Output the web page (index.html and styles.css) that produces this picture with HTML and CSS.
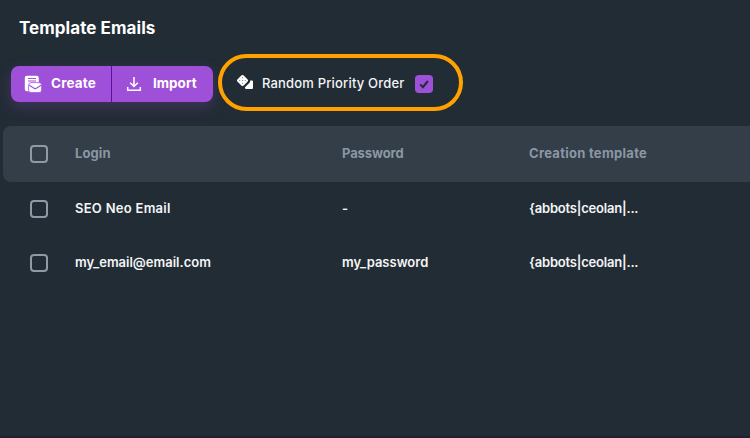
FILE: index.html
```html
<!DOCTYPE html>
<html lang="en">
<head>
<meta charset="utf-8">
<title>Template Emails</title>
<link rel="stylesheet" href="styles.css">
</head>
<body>
<main class="panel">
  <h1 class="title">Template Emails</h1>
  <div class="toolbar">
    <div class="button-group">
      <button class="btn btn-create">
        <svg width="18" height="18" viewBox="0 0 18 18">
          <path d="M3 .8h9.500q2.300 0 2.300 2.300V8H6v8.200H3Q.8 16.200.8 14V3Q.8.8 3 .8Z" fill="#fff"/>
          <path d="M4 3.500h8M4 6h8" stroke="#9f50d8" stroke-width="1.100"/>
          <rect x="4.600" y="7.600" width="13" height="10" rx="2.600" fill="#fff" stroke="#9f50d8" stroke-width=".8"/>
          <path d="M5.300 10.300l5.100 3.100q.8.400 1.600 0l5.100-3.100" fill="none" stroke="#9f50d8" stroke-width="1.200"/>
        </svg>
        <span class="label-create">Create</span>
      </button>
      <button class="btn btn-import">
        <svg width="16" height="16" viewBox="0 0 16 16" fill="none" stroke="#fff" stroke-width="1.500">
          <path d="M8 1v9M4.200 6.800L8 10.500l3.800-3.700M1.700 11v3.300h12.600V11"/>
        </svg>
        <span class="label-import">Import</span>
      </button>
    </div>
    <label class="priority">
      <svg width="18" height="16" viewBox="0 0 18 16">
        <rect x="2.200" y="2.200" width="8.600" height="8.600" rx="1.300" transform="rotate(45 6.500 6.500)" fill="#fff"/>
        <path d="M16 6.500q1 0 1 1V14q0 1-1 1H10q-1 0-1-1v-.8l4.500-4.500q1-1 .6-2.200Z" fill="#fff"/>
        <g fill="#222c35" fill-opacity=".6"><circle cx="6.500" cy="3.700" r=".6"/><circle cx="3.700" cy="6.500" r=".6"/><circle cx="6.500" cy="6.500" r=".6"/><circle cx="9.300" cy="6.500" r=".6"/><circle cx="6.500" cy="9.300" r=".6"/></g>
      </svg>
      <span class="label-priority">Random Priority Order</span>
      <span class="check checked">
        <svg width="18" height="18" viewBox="0 0 18 18"><path d="M5.200 9.400l2.700 2.800 5-6.200" fill="none" stroke="#222c35" stroke-width="2"/></svg>
      </span>
    </label>
  </div>
  <section class="table">
    <div class="row head">
      <span class="check"></span>
      <span class="cell">Login</span>
      <span class="cell cell-narrow">Password</span>
      <span class="cell cell-wide">Creation template</span>
    </div>
    <div class="row">
      <span class="check"></span>
      <span class="cell cell-name">SEO Neo Email</span>
      <span class="cell">-</span>
      <span class="cell cell-template">{abbots|ceolan|...</span>
    </div>
    <div class="row">
      <span class="check"></span>
      <span class="cell cell-mail">my_email@email.com</span>
      <span class="cell cell-mail">my_password</span>
      <span class="cell cell-template">{abbots|ceolan|...</span>
    </div>
  </section>
</main>
</body>
</html>
```
FILE: styles.css
```css
* { box-sizing: border-box; }
body {
  margin: 0;
  height: 438px;
  overflow: hidden;
  background: #222c35;
  border-bottom: 2px solid #241f33;
  color: #f4f5f6;
  font: 500 13px/18px Inter, "Liberation Sans", sans-serif;
  white-space: nowrap;
}
.title {
  margin: 0;
  padding: 16px 0 0 19px;
  font-size: 17px;
  line-height: 24px;
  font-weight: 700;
  letter-spacing: .06px;
  color: #fff;
}
.toolbar {
  display: flex;
  align-items: center;
  gap: 5px;
  height: 57px;
  margin-top: 14px;
  padding-left: 11px;
}
.button-group {
  display: flex;
  height: 36px;
  margin-top: 2px;
  width: 202px;
  border-radius: 8px;
  background: #9f50d8;
  box-shadow: 0 5px 14px rgba(159, 80, 216, .25);
}
.btn {
  display: flex;
  align-items: center;
  border: 0;
  padding: 0;
  background: none;
  color: #fff;
  font: 700 13.500px/18px Inter, "Liberation Sans", sans-serif;
}
.label-create, .label-import { padding-bottom: 2px; }
.label-create { letter-spacing: .16px; }
.btn-create { width: 101px; padding-left: 13px; gap: 9px; border-right: 1px solid #5a0fa5; }
.btn-import { padding-left: 14px; gap: 11px; }
.priority {
  display: flex;
  align-items: center;
  width: 245px;
  height: 57px;
  padding: 2px 0 0 15px;
  border: 4px solid #ffa200;
  border-radius: 29px;
}
.priority > svg { margin: -4px 0 0 -1px; }
.label-priority { width: 153px; margin-left: 8px; padding-bottom: 2px; letter-spacing: .18px; }
.check {
  display: block;
  width: 18px;
  height: 18px;
  border: 2px solid #8d9ba8;
  border-radius: 4px;
}
.checked { border: 0; background: #9f50d8; }
.checked svg { display: block; }
.table { margin: 15px 0 0 3px; }
.row {
  display: grid;
  grid-template-columns: 45px 267px 187px 1fr;
  align-items: center;
  height: 54px;
  padding-left: 27px;
  font-weight: 600;
}
.cell { padding-bottom: 2px; letter-spacing: .1px; }
.cell-name { letter-spacing: .27px; }
.cell-mail { letter-spacing: 0; }
.cell-template { letter-spacing: -.2px; }
.head {
  height: 56px;
  border-radius: 8px 0 0 8px;
  background: #343e48;
  color: #8a97a5;
  font-weight: 700;
}
.head .cell-narrow { letter-spacing: -.1px; }
.head .cell-wide { letter-spacing: .28px; }
```
